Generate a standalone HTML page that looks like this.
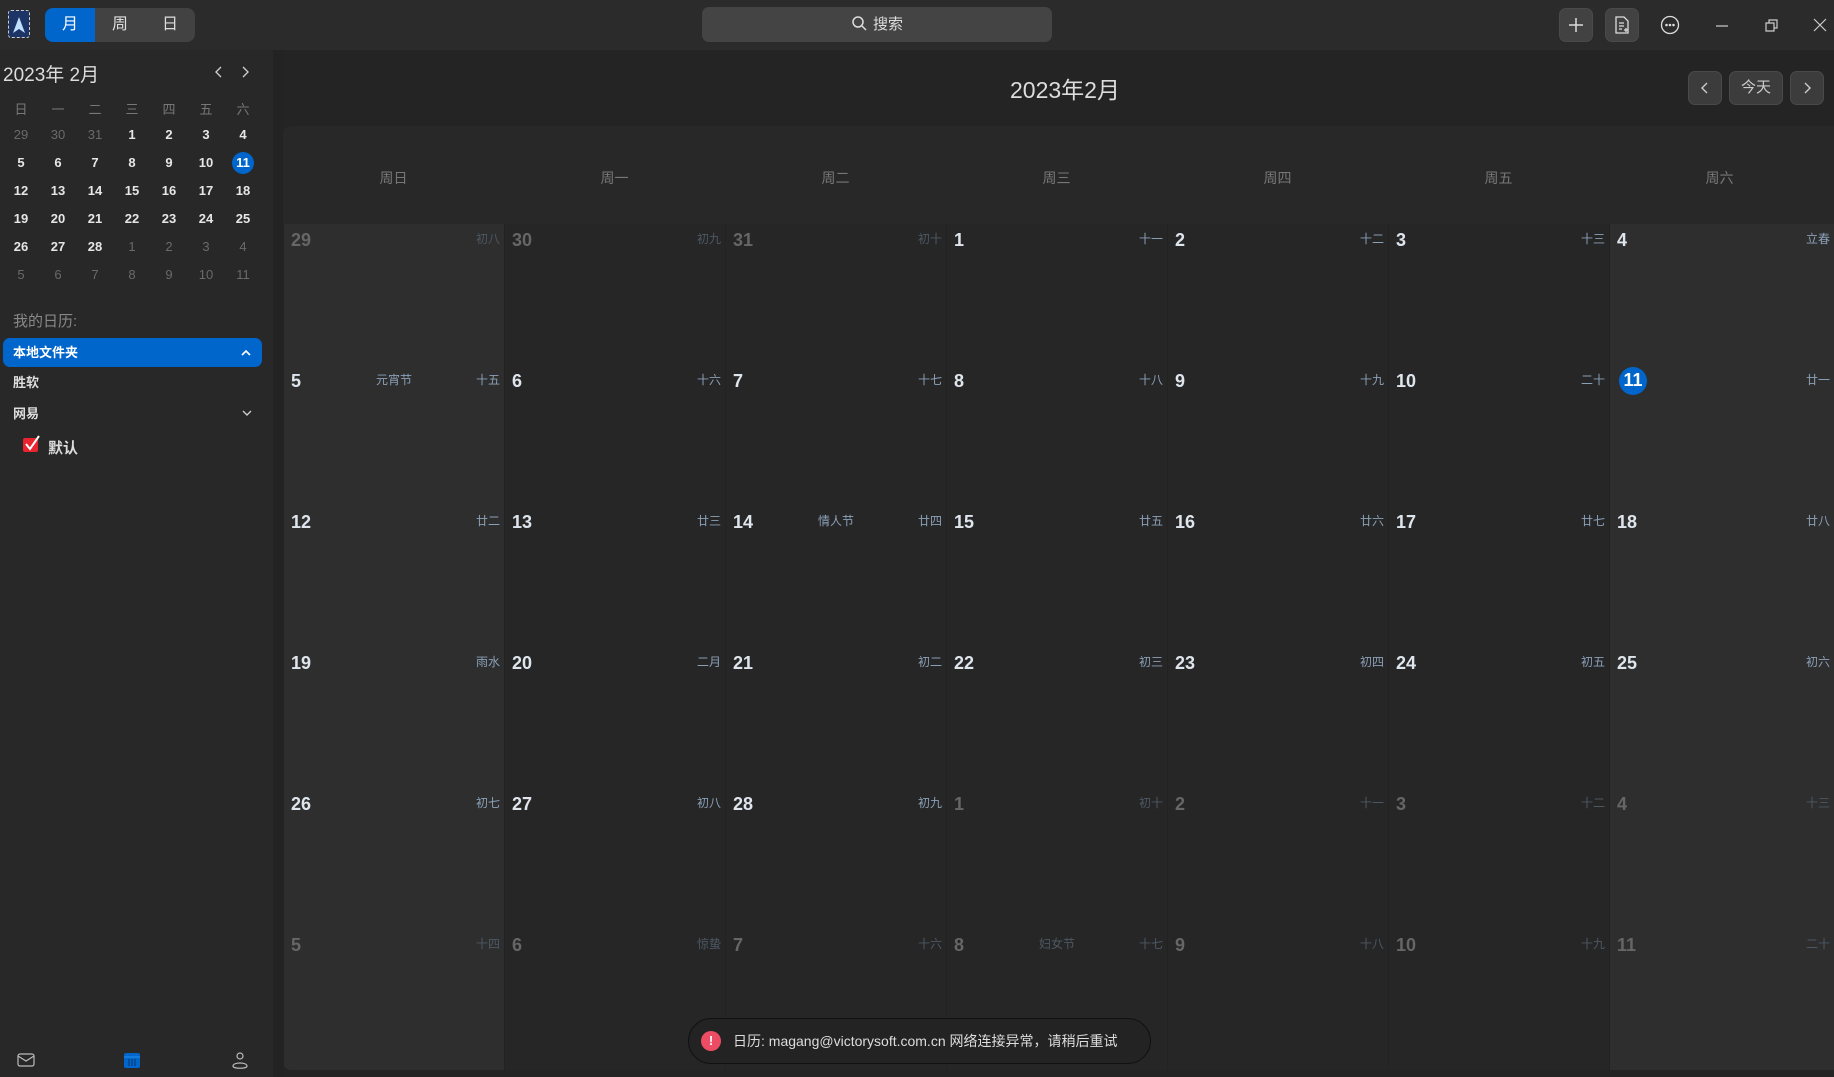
<!DOCTYPE html>
<html><head><meta charset="utf-8"><style>
*{margin:0;padding:0;box-sizing:border-box}
body{width:1834px;height:1077px;background:#242424;font-family:"Liberation Sans","Noto Sans CJK SC",sans-serif;color:#ddd;position:relative;overflow:hidden}
.abs{position:absolute}
.top{left:0;top:0;width:1834px;height:50px;background:#2b2b2b}
.seg{left:45px;top:8px;width:150px;height:34px;background:#424242;border-radius:8px;overflow:hidden;display:flex;font-size:16px}
.seg div{width:50px;text-align:center;line-height:34px;color:#ddd}
.seg .on{background:#0066cc;color:#fff}
.search{left:702px;top:7px;width:350px;height:35px;background:#444;border-radius:7px;color:#ddd;font-size:15px;text-align:center;line-height:35px}
.tbtn{top:8px;width:34px;height:34px;background:#424242;border:1px solid #4a4a4a;border-radius:7px}
.side{left:0;top:50px;width:273px;height:1027px;background:#282828}
.div{left:273px;top:50px;width:10px;height:1027px;background:#232323}
.mc{position:absolute;width:30px;text-align:center;font-size:13px;font-weight:bold;color:#e6e6e6}
.mc.o{color:#6a6a6a;font-weight:normal}
.mc.h{color:#777;font-weight:normal}
.grid{left:283px;top:126px;width:1551px;height:944px;background:#282828;border-radius:8px 0 0 8px;overflow:hidden}
.cells{position:absolute;left:0;top:98px;display:grid;grid-template-columns:repeat(6,221px) 225px;grid-template-rows:repeat(6,141px)}
.c{position:relative;background:#262626;border-left:1px solid #222}
.c.w{background:#2e2e2e}
.c .n{position:absolute;left:7px;top:6px;font-size:18px;font-weight:bold;color:#dfe5ec}
.c .l{position:absolute;right:4px;top:6px;font-size:12px;color:#8aa0b8}
.c .f{position:absolute;left:0;right:0;text-align:center;top:6px;font-size:12px;color:#8aa0b8}
.c.o .n{color:#666}.c.o .l,.c.o .f{color:#4c5864}
.hd{position:absolute;top:42px;width:221px;text-align:center;font-size:14px;color:#777}
.nb{top:71px;height:34px;background:#3c3c3c;border:1px solid #4a4a4a;border-radius:7px;color:#ccc;text-align:center;line-height:32px;font-size:15px}
</style></head><body>
<div class="abs top"></div>
<div class="abs" style="left:8px;top:10px;width:22px;height:28px;background:#1c3566;border:1px dashed #ccc;border-radius:3px"><svg width="20" height="26"><path d="M10 6 L4 22 L10 18 L16 22 Z" fill="#bfe0ff"/></svg></div>
<div class="abs seg"><div class="on">月</div><div>周</div><div>日</div></div>
<div class="abs search"><svg width="16" height="16" style="vertical-align:-2px;margin-right:6px"><circle cx="7" cy="7" r="5" fill="none" stroke="#ddd" stroke-width="1.5"/><path d="M11 11 L15 15" stroke="#ddd" stroke-width="1.5"/></svg>搜索</div>
<div class="abs tbtn" style="left:1559px"><svg width="32" height="32"><path d="M16 9V23M9 16H23" stroke="#ddd" stroke-width="1.5"/></svg></div>
<div class="abs tbtn" style="left:1605px"><svg width="32" height="32"><path d="M10 8H18L22 12V24H10Z M13 14H18M13 17H18M13 20H16 M18 21H22M20 19V23" fill="none" stroke="#ddd" stroke-width="1.3"/></svg></div>
<svg class="abs" style="left:1657px;top:12px" width="26" height="26"><circle cx="13" cy="13" r="8.5" fill="none" stroke="#ddd" stroke-width="1.3"/><circle cx="9.5" cy="13" r="1.3" fill="#ddd"/><circle cx="13" cy="13" r="1.3" fill="#ddd"/><circle cx="16.5" cy="13" r="1.3" fill="#ddd"/></svg>
<svg class="abs" style="left:1712px;top:15px" width="20" height="20"><path d="M4 11H16" stroke="#ccc" stroke-width="1.2"/></svg>
<svg class="abs" style="left:1761px;top:15px" width="20" height="20"><path d="M5 8H13V16H5Z M8 8V5H16V13H13" fill="none" stroke="#ccc" stroke-width="1.2"/></svg>
<svg class="abs" style="left:1810px;top:15px" width="20" height="20"><path d="M4 4L16 16M16 4L4 16" stroke="#ccc" stroke-width="1.2"/></svg>

<div class="abs side"></div>
<div class="abs div"></div>
<div class="abs" style="left:3px;top:60px;font-size:19px;color:#ddd">2023年 2月</div>
<svg class="abs" style="left:210px;top:64px" width="44" height="16"><path d="M11 3L6 8L11 13M33 3L38 8L33 13" fill="none" stroke="#ccc" stroke-width="1.4"/></svg>
<div style="position:absolute;left:6px;top:99px">
<div class="mc h" style="left:0;top:0">日</div><div class="mc h" style="left:37px;top:0">一</div><div class="mc h" style="left:74px;top:0">二</div><div class="mc h" style="left:111px;top:0">三</div><div class="mc h" style="left:148px;top:0">四</div><div class="mc h" style="left:185px;top:0">五</div><div class="mc h" style="left:222px;top:0">六</div>
<div class="mc o" style="left:0;top:28px">29</div><div class="mc o" style="left:37px;top:28px">30</div><div class="mc o" style="left:74px;top:28px">31</div><div class="mc" style="left:111px;top:28px">1</div><div class="mc" style="left:148px;top:28px">2</div><div class="mc" style="left:185px;top:28px">3</div><div class="mc" style="left:222px;top:28px">4</div>
<div class="mc" style="left:0;top:56px">5</div><div class="mc" style="left:37px;top:56px">6</div><div class="mc" style="left:74px;top:56px">7</div><div class="mc" style="left:111px;top:56px">8</div><div class="mc" style="left:148px;top:56px">9</div><div class="mc" style="left:185px;top:56px">10</div>
<div style="position:absolute;left:226px;top:53px;width:22px;height:22px;border-radius:50%;background:#0066cc"></div><div class="mc" style="left:222px;top:56px;color:#fff">11</div>
<div class="mc" style="left:0;top:84px">12</div><div class="mc" style="left:37px;top:84px">13</div><div class="mc" style="left:74px;top:84px">14</div><div class="mc" style="left:111px;top:84px">15</div><div class="mc" style="left:148px;top:84px">16</div><div class="mc" style="left:185px;top:84px">17</div><div class="mc" style="left:222px;top:84px">18</div>
<div class="mc" style="left:0;top:112px">19</div><div class="mc" style="left:37px;top:112px">20</div><div class="mc" style="left:74px;top:112px">21</div><div class="mc" style="left:111px;top:112px">22</div><div class="mc" style="left:148px;top:112px">23</div><div class="mc" style="left:185px;top:112px">24</div><div class="mc" style="left:222px;top:112px">25</div>
<div class="mc" style="left:0;top:140px">26</div><div class="mc" style="left:37px;top:140px">27</div><div class="mc" style="left:74px;top:140px">28</div><div class="mc o" style="left:111px;top:140px">1</div><div class="mc o" style="left:148px;top:140px">2</div><div class="mc o" style="left:185px;top:140px">3</div><div class="mc o" style="left:222px;top:140px">4</div>
<div class="mc o" style="left:0;top:168px">5</div><div class="mc o" style="left:37px;top:168px">6</div><div class="mc o" style="left:74px;top:168px">7</div><div class="mc o" style="left:111px;top:168px">8</div><div class="mc o" style="left:148px;top:168px">9</div><div class="mc o" style="left:185px;top:168px">10</div><div class="mc o" style="left:222px;top:168px">11</div>
</div>
<div class="abs" style="left:13px;top:310px;font-size:15px;color:#888">我的日历:</div>
<div class="abs" style="left:3px;top:338px;width:259px;height:29px;background:#0066cc;border-radius:7px;color:#fff;font-size:13px;font-weight:bold;line-height:29px;padding-left:10px">本地文件夹<svg style="position:absolute;right:10px;top:10px" width="12" height="10"><path d="M2 7L6 3L10 7" fill="none" stroke="#fff" stroke-width="1.6"/></svg></div>
<div class="abs" style="left:13px;top:372px;font-size:13px;font-weight:bold;color:#ddd">胜软</div>
<div class="abs" style="left:13px;top:403px;font-size:13px;font-weight:bold;color:#ddd">网易</div>
<svg class="abs" style="left:241px;top:408px" width="12" height="10"><path d="M2 3L6 7L10 3" fill="none" stroke="#ccc" stroke-width="1.4"/></svg>
<svg class="abs" style="left:22px;top:435px" width="20" height="18"><rect x="1" y="3" width="15" height="14" rx="2" fill="#e8252f"/><path d="M4 9L8 14L17 1" fill="none" stroke="#fff" stroke-width="2"/></svg>
<div class="abs" style="left:48px;top:437px;font-size:15px;font-weight:bold;color:#ddd">默认</div>
<svg class="abs" style="left:16px;top:1050px" width="20" height="20"><rect x="2" y="4" width="16" height="12" rx="2" fill="none" stroke="#bbb" stroke-width="1.2"/><path d="M2 6L10 11L18 6" fill="none" stroke="#bbb" stroke-width="1.2"/></svg>
<svg class="abs" style="left:122px;top:1050px" width="20" height="20"><rect x="2" y="3" width="16" height="15" rx="2" fill="#0066cc"/><path d="M2 7H18" stroke="#1a82e0" stroke-width="1.5"/><path d="M7 9V16M10 9V16M13 9V16" stroke="#04438a" stroke-width="1.5"/></svg>
<svg class="abs" style="left:230px;top:1050px" width="20" height="20"><circle cx="10" cy="6" r="3" fill="none" stroke="#bbb" stroke-width="1.2"/><path d="M3 16C3 12 17 12 17 16C17 19 3 19 3 16Z" fill="none" stroke="#bbb" stroke-width="1.2"/></svg>

<div class="abs" style="left:0;width:2130px;text-align:center;top:71px;font-size:23px;color:#ddd">2023年2月</div>
<div class="abs nb" style="left:1688px;width:34px"><svg width="32" height="32"><path d="M18 11L13 16L18 21" fill="none" stroke="#ccc" stroke-width="1.4"/></svg></div>
<div class="abs nb" style="left:1729px;width:54px">今天</div>
<div class="abs nb" style="left:1790px;width:34px"><svg width="32" height="32"><path d="M14 11L19 16L14 21" fill="none" stroke="#ccc" stroke-width="1.4"/></svg></div>

<div class="abs grid">
<div class="hd" style="left:0">周日</div><div class="hd" style="left:221px">周一</div><div class="hd" style="left:442px">周二</div><div class="hd" style="left:663px">周三</div><div class="hd" style="left:884px">周四</div><div class="hd" style="left:1105px">周五</div><div class="hd" style="left:1326px">周六</div>
<div class="cells">
<div class="c w o"><span class="n">29</span><span class="l">初八</span></div><div class="c o"><span class="n">30</span><span class="l">初九</span></div><div class="c o"><span class="n">31</span><span class="l">初十</span></div><div class="c"><span class="n">1</span><span class="l">十一</span></div><div class="c"><span class="n">2</span><span class="l">十二</span></div><div class="c"><span class="n">3</span><span class="l">十三</span></div><div class="c w"><span class="n">4</span><span class="l">立春</span></div>
<div class="c w"><span class="n">5</span><span class="f">元宵节</span><span class="l">十五</span></div><div class="c"><span class="n">6</span><span class="l">十六</span></div><div class="c"><span class="n">7</span><span class="l">十七</span></div><div class="c"><span class="n">8</span><span class="l">十八</span></div><div class="c"><span class="n">9</span><span class="l">十九</span></div><div class="c"><span class="n">10</span><span class="l">二十</span></div><div class="c w"><span style="position:absolute;left:9px;top:2px;width:28px;height:28px;border-radius:50%;background:#0066cc"></span><span class="n" style="color:#fff;left:9px;width:28px;text-align:center;top:5px">11</span><span class="l">廿一</span></div>
<div class="c w"><span class="n">12</span><span class="l">廿二</span></div><div class="c"><span class="n">13</span><span class="l">廿三</span></div><div class="c"><span class="n">14</span><span class="f">情人节</span><span class="l">廿四</span></div><div class="c"><span class="n">15</span><span class="l">廿五</span></div><div class="c"><span class="n">16</span><span class="l">廿六</span></div><div class="c"><span class="n">17</span><span class="l">廿七</span></div><div class="c w"><span class="n">18</span><span class="l">廿八</span></div>
<div class="c w"><span class="n">19</span><span class="l">雨水</span></div><div class="c"><span class="n">20</span><span class="l">二月</span></div><div class="c"><span class="n">21</span><span class="l">初二</span></div><div class="c"><span class="n">22</span><span class="l">初三</span></div><div class="c"><span class="n">23</span><span class="l">初四</span></div><div class="c"><span class="n">24</span><span class="l">初五</span></div><div class="c w"><span class="n">25</span><span class="l">初六</span></div>
<div class="c w"><span class="n">26</span><span class="l">初七</span></div><div class="c"><span class="n">27</span><span class="l">初八</span></div><div class="c"><span class="n">28</span><span class="l">初九</span></div><div class="c o"><span class="n">1</span><span class="l">初十</span></div><div class="c o"><span class="n">2</span><span class="l">十一</span></div><div class="c o"><span class="n">3</span><span class="l">十二</span></div><div class="c w o"><span class="n">4</span><span class="l">十三</span></div>
<div class="c w o"><span class="n">5</span><span class="l">十四</span></div><div class="c o"><span class="n">6</span><span class="l">惊蛰</span></div><div class="c o"><span class="n">7</span><span class="l">十六</span></div><div class="c o"><span class="n">8</span><span class="f">妇女节</span><span class="l">十七</span></div><div class="c o"><span class="n">9</span><span class="l">十八</span></div><div class="c o"><span class="n">10</span><span class="l">十九</span></div><div class="c w o"><span class="n">11</span><span class="l">二十</span></div>
</div></div>

<div class="abs" style="left:688px;top:1018px;width:463px;height:46px;background:#232323;border:1px solid #111;border-radius:23px;font-size:14px;color:#ddd;line-height:44px;padding-left:44px">
<span style="position:absolute;left:12px;top:12px;width:20px;height:20px;border-radius:50%;background:#ec4d64;color:#fff;font-size:13px;font-weight:bold;line-height:20px;text-align:center">!</span>日历: magang@victorysoft.com.cn 网络连接异常，请稍后重试</div>
</body></html>
